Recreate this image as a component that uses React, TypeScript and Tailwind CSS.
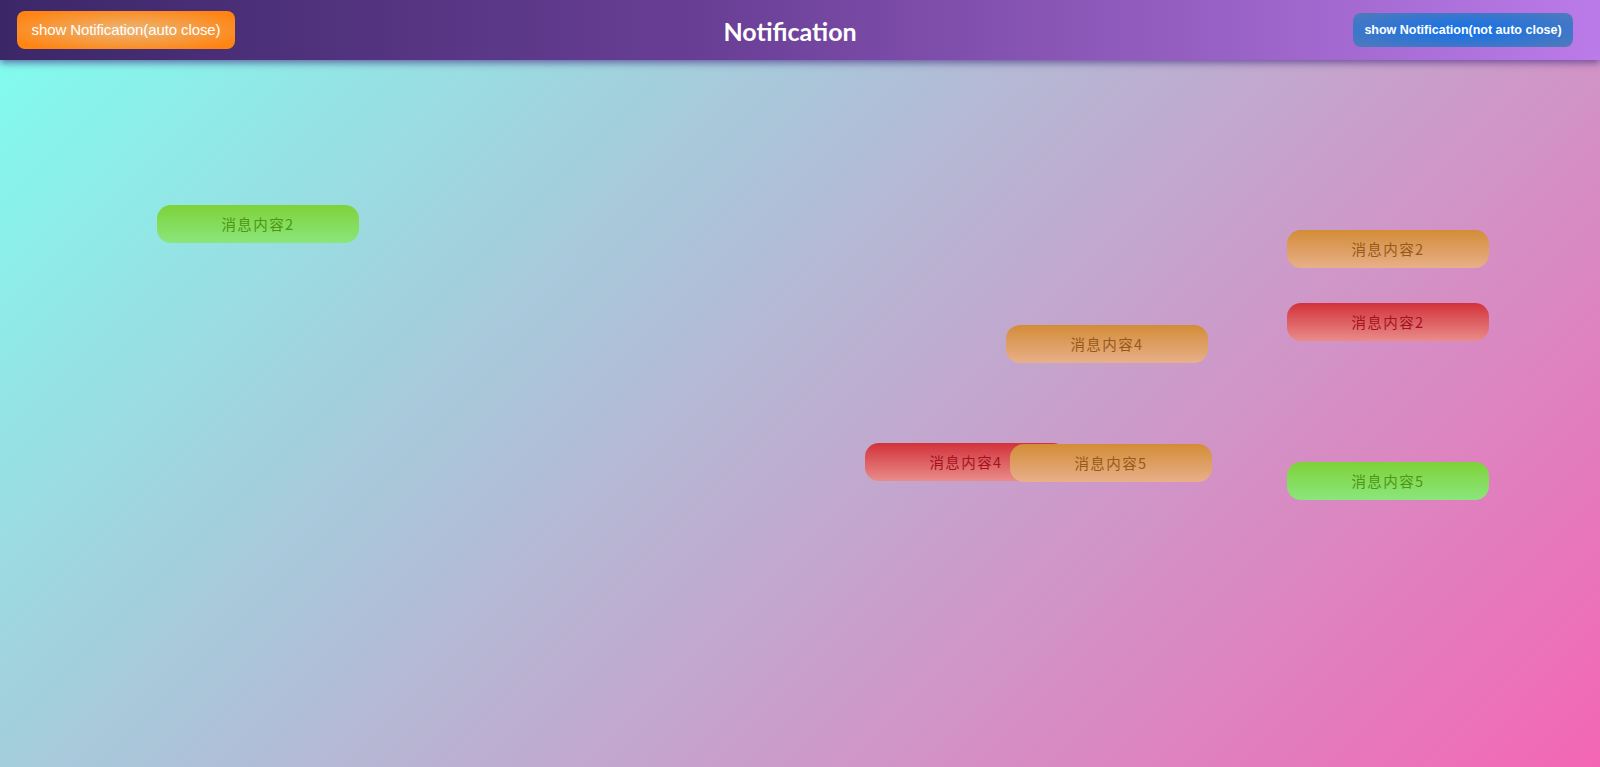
import React from "react";

type Kind = "green" | "orange" | "red";

const kindClass: Record<Kind, string> = {
  green: "bg-[linear-gradient(to_bottom,#7ed239,#8ae67c)] text-[#4f9612]",
  orange: "bg-[linear-gradient(to_bottom,#d38c37,#e8b08a)] text-[#985a17]",
  red: "bg-[linear-gradient(to_bottom,#d2323a,#e98c8a)] text-[#a5121d]",
};

const notes: { kind: Kind; text: string; left: number; top: number }[] = [
  { kind: "green", text: "消息内容2", left: 157, top: 205 },
  { kind: "orange", text: "消息内容2", left: 1287, top: 230 },
  { kind: "red", text: "消息内容2", left: 1287, top: 303 },
  { kind: "orange", text: "消息内容4", left: 1006, top: 325 },
  { kind: "red", text: "消息内容4", left: 865, top: 443 },
  { kind: "orange", text: "消息内容5", left: 1010, top: 444 },
  { kind: "green", text: "消息内容5", left: 1287, top: 462 },
];

export default function App() {
  return (
    <div className="relative w-full h-[767px] overflow-hidden bg-[linear-gradient(135deg,#7ffff0,#f466b4)]">
      <header className="relative z-10 h-[60px] flex items-center justify-between pl-[17px] pr-[27px] bg-[linear-gradient(to_right,#3b2768,#6a3f96_45%,#bb7be9)] shadow-[0_3px_7px_rgba(70,45,130,0.65)]">
        <button className="h-[38px] w-[218px] rounded-[8px] text-white text-[15px] tracking-[-0.1px] font-['Liberation_Sans',Arial,sans-serif] bg-[radial-gradient(ellipse_at_center,#ebb677,#ff8412_85%)]">
          show Notification(auto close)
        </button>
        <h1 className="text-white text-[25px] font-bold font-['Lato','Open_Sans',sans-serif] -translate-x-[4px] translate-y-[2px]">
          Notification
        </h1>
        <button className="h-[34px] w-[220px] rounded-[8px] text-white text-[12.5px] font-bold font-['Liberation_Sans',Arial,sans-serif] bg-[radial-gradient(ellipse_at_center,#1272ea,#4b79be_90%)]">
          show Notification(not auto close)
        </button>
      </header>
      {notes.map((n, i) => (
        <div
          key={i}
          className={`absolute w-[202px] h-[38px] rounded-[14px] flex items-center justify-center text-[14.5px] tracking-[1.4px] font-['Noto_Sans_CJK_SC','Noto_Sans',sans-serif] ${kindClass[n.kind]}`}
          style={{ left: n.left, top: n.top }}
        >
          {n.text}
        </div>
      ))}
    </div>
  );
}
